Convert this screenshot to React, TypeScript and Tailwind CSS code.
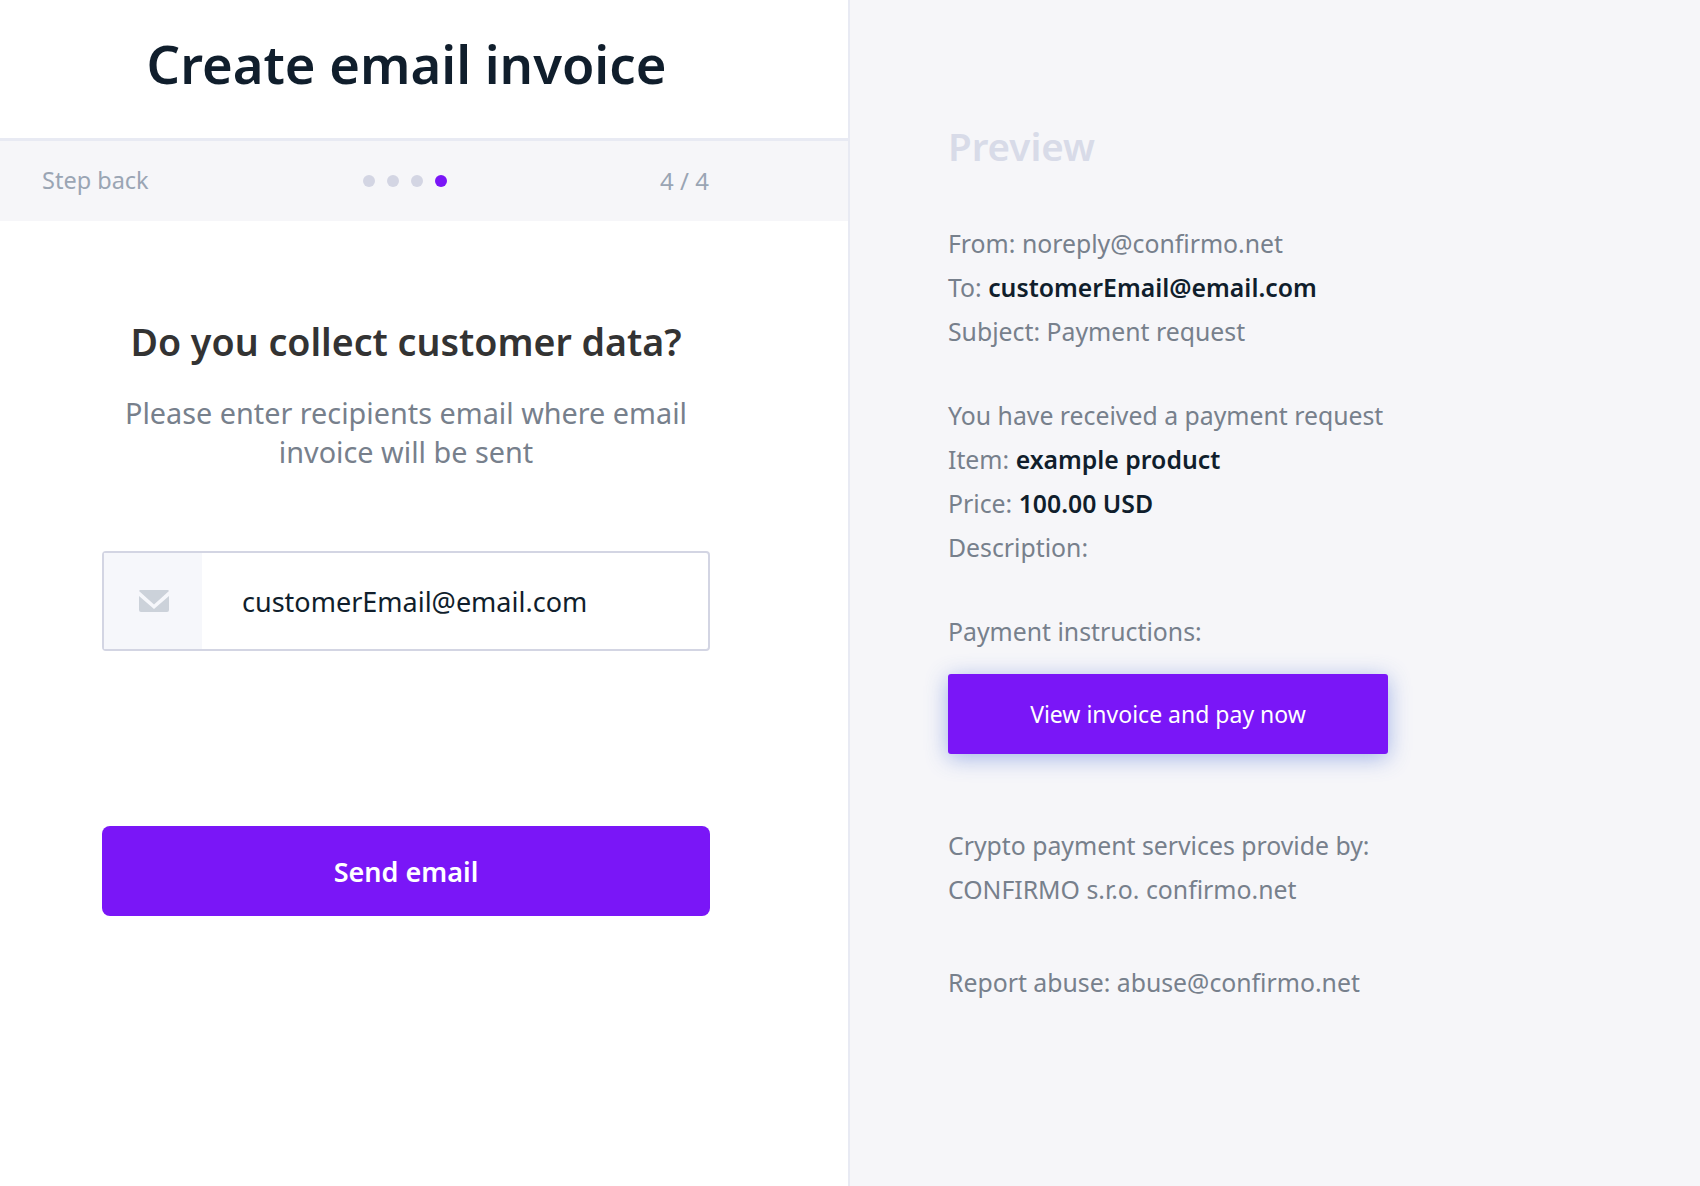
import React from 'react';

const App = () => {
  return (
    <div className="flex h-[1186px] w-[1700px] overflow-hidden bg-white font-['Noto_Sans',sans-serif]">
      {/* Form column */}
      <div className="flex w-[850px] shrink-0 flex-col border-r-2 border-[#e8eaf3] bg-white">
        <div className="flex h-[141px] items-center justify-center border-b-[3px] border-[#e8eaf3] pb-[9px] pr-[35px]">
          <h1 className="text-[52.6px] font-semibold text-[#101e2c]">Create email invoice</h1>
        </div>
        <div className="flex h-[80px] items-center justify-between bg-[#f6f6f9] pl-[42px] pr-[139px]">
          <span className="text-[23.5px] text-[#9aa5b4]">Step back</span>
          <div className="ml-[2px] flex gap-3">
            <span className="h-3 w-3 rounded-full bg-[#d3d5e3]"></span>
            <span className="h-3 w-3 rounded-full bg-[#d3d5e3]"></span>
            <span className="h-3 w-3 rounded-full bg-[#d3d5e3]"></span>
            <span className="h-3 w-3 rounded-full bg-[#7a16f7]"></span>
          </div>
          <span className="text-[24px] text-[#9aa5b4]">4 / 4</span>
        </div>
        <div className="flex w-[812px] flex-col items-center px-[102px] pt-[92px]">
          <h2 className="text-[37.6px] font-semibold leading-[58px] text-[#333333]">Do you collect customer data?</h2>
          <p className="mt-[22px] text-center text-[28.8px] leading-[39px] text-[#77808c]">
            Please enter recipients email where email invoice will be sent
          </p>
          <div className="mt-[80px] flex h-[100px] w-[608px] rounded border-2 border-[#d3d5e3]">
            <div className="flex w-[98px] items-center justify-center bg-[#f6f7fb] pl-[2px]">
              <svg width="30" height="22" viewBox="0 0 30 22">
                <path d="M2 0h26a2 2 0 0 1 2 1L15 14.5 0 1a2 2 0 0 1 2-1z" fill="#ccd2da" />
                <path d="M0 6l15 13L30 6v14a2 2 0 0 1-2 2H2a2 2 0 0 1-2-2z" fill="#ccd2da" />
              </svg>
            </div>
            <span className="flex items-center pl-[40px] pt-[2px] text-[27px] text-[#101e2c]">customerEmail@email.com</span>
          </div>
          <button className="mt-[175px] h-[90px] w-[608px] rounded-lg bg-[#7a16f7] pt-[2px] text-[27px] font-semibold text-white">
            Send email
          </button>
        </div>
      </div>

      {/* Preview column */}
      <div className="flex-1 bg-[#f6f6f9] pl-[98px] pt-[120px] text-[24.8px] leading-[44px] text-[#77808c]">
        <h3 className="text-[38.5px] font-semibold leading-[52px] text-[#d8dbe8]">Preview</h3>
        <div className="mt-[49px]">
          <p>From: noreply@confirmo.net</p>
          <p>To: <b className="font-semibold text-[#101e2c]">customerEmail@email.com</b></p>
          <p>Subject: Payment request</p>
        </div>
        <div className="mt-[40px]">
          <p>You have received a payment request</p>
          <p>Item: <b className="font-semibold text-[#101e2c]">example product</b></p>
          <p>Price: <b className="font-semibold text-[#101e2c]">100.00 USD</b></p>
          <p>Description:</p>
        </div>
        <p className="mt-[40px]">Payment instructions:</p>
        <button className="mt-[21px] block h-[80px] w-[440px] rounded-[3px] bg-[#7a16f7] text-[23px] text-white shadow-[0_4px_22px_rgba(60,100,210,0.45)]">
          View invoice and pay now
        </button>
        <div className="mt-[69px]">
          <p>Crypto payment services provide by:</p>
          <p>CONFIRMO s.r.o. confirmo.net</p>
        </div>
        <p className="mt-[49px]">Report abuse: abuse@confirmo.net</p>
      </div>
    </div>
  );
};

export default App;
